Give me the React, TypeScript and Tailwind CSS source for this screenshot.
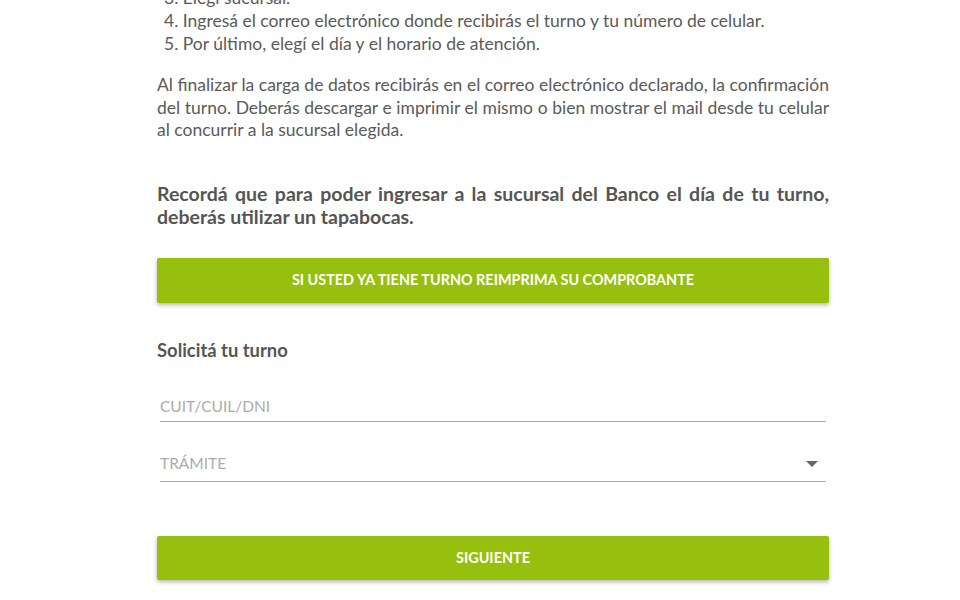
export default function App() {
  return (
    <div className="min-h-[600px] bg-white overflow-hidden font-['Lato',sans-serif] text-[#5a5a5a]">
      <div className="w-[672px] ml-[157px] mt-[-14px]">
        <ol start={3} className="pl-[7px] text-[17.5px] leading-[23px]">
          <li>3. Elegí sucursal.</li>
          <li>4. Ingresá el correo electrónico donde recibirás el turno y tu número de celular.</li>
          <li>5. Por último, elegí el día y el horario de atención.</li>
        </ol>

        <p className="mt-[19px] text-[17.5px] leading-[22.5px] text-justify">
          Al finalizar la carga de datos recibirás en el correo electrónico declarado, la confirmación del turno. Deberás descargar e imprimir el mismo o bien mostrar el mail desde tu celular al concurrir a la sucursal elegida.
        </p>

        <p className="mt-[40px] text-[19.5px] leading-[23px] font-bold text-justify text-[#555]">
          Recordá que para poder ingresar a la sucursal del Banco el día de tu turno, deberás utilizar un tapabocas.
        </p>

        <button className="mt-[30px] w-full h-[45px] rounded-[2px] bg-[#97bf0d] text-white text-[14.4px] font-bold shadow-[0_2px_4px_rgba(0,0,0,0.3)]">
          SI USTED YA TIENE TURNO REIMPRIMA SU COMPROBANTE
        </button>

        <h2 className="mt-[35px] text-[18.4px] leading-[24px] font-bold text-[#555]">Solicitá tu turno</h2>

        <div className="mx-[3px] mt-[30px] flex flex-col">
          <input
            placeholder="CUIT/CUIL/DNI"
            className="h-[30px] w-full border-b border-[#a3c43a] outline-none text-[15.5px] text-[#555] placeholder:text-[#ababab]"
          />
          <div className="mt-[26px] h-[34px] w-full border-b border-[#a3c43a] flex items-center justify-between">
            <span className="text-[15.5px] text-[#ababab]">TRÁMITE</span>
            <svg width="12" height="7" viewBox="0 0 12 7" className="mr-[8px]">
              <path d="M0 0h12L6 6z" fill="#666" />
            </svg>
          </div>
        </div>

        <button className="mt-[54px] w-full h-[44px] rounded-[2px] bg-[#97bf0d] text-white text-[14.4px] font-bold shadow-[0_2px_4px_rgba(0,0,0,0.3)]">
          SIGUIENTE
        </button>
      </div>
    </div>
  );
}
